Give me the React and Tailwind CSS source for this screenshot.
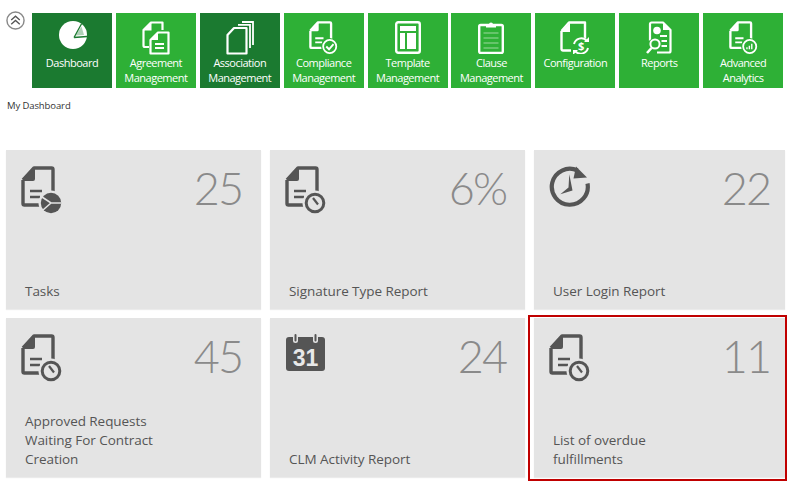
import React from 'react';

const GREEN = '#2eb036';
const DARK_GREEN = '#1b7a30';
const GREY = '#555555';
const CARD = '#e4e4e4';

// document outline with the folded corner, shared by most of the icons
const DocShape = ({color}) => (
  <>
    <path d="M2 14 L13 2 H30.5 A1.5 1.5 0 0 1 32 3.5 V30 M22 39 H3.5 A1.5 1.5 0 0 1 2 37.5 V14" fill="none" stroke={color} strokeWidth="3.4" strokeLinejoin="round"/>
    <path d="M2 15 L14 2 V13 A2 2 0 0 1 12 15 Z" fill={color}/>
    <path d="M9 25 H21 M9 31 H19" stroke={color} strokeWidth="2.6" fill="none"/>
  </>
);

const ClockBadge = ({color, bg}) => (
  <>
    <circle cx="30" cy="37" r="12.5" fill={bg}/>
    <circle cx="30" cy="37" r="8.8" fill="none" stroke={color} strokeWidth="3"/>
    <path d="M28 32 L33 38.5" stroke={color} strokeWidth="2.2" fill="none"/>
  </>
);

const PieBadge = ({color, bg}) => (
  <>
    <circle cx="30" cy="37" r="12.5" fill={bg}/>
    <circle cx="30" cy="37" r="10.2" fill={color}/>
    <path d="M21 31 L30 37 L40 37 M30 37 L22 44" stroke={bg} strokeWidth="1.6" fill="none"/>
  </>
);

const CheckBadge = ({color, bg}) => (
  <>
    <circle cx="30" cy="37" r="12.5" fill={bg}/>
    <circle cx="30" cy="37" r="9.5" fill="none" stroke={color} strokeWidth="2.6"/>
    <path d="M25 37 L29 41 L35.5 33.5" stroke={color} strokeWidth="2.8" fill="none"/>
  </>
);

const ChartBadge = ({color, bg}) => (
  <>
    <circle cx="30" cy="37" r="12.5" fill={bg}/>
    <circle cx="30" cy="37" r="9.5" fill="none" stroke={color} strokeWidth="2.6"/>
    <path d="M25 41 V38 H27 V41 Z M28.5 41 V36 H30.5 V41 Z M32 41 V33 H34 V41 Z" fill={color}/>
  </>
);

const DocIcon = ({badge: Badge, color = GREY, bg = CARD, className}) => (
  <svg viewBox="0 0 42 50" className={className}>
    <DocShape color={color}/>
    <Badge color={color} bg={bg}/>
  </svg>
);

const DashboardIcon = () => (
  <svg viewBox="0 0 28 28" className="w-[28px] h-[28px] ml-[1px]">
    <circle cx="14" cy="14" r="14" fill="white"/>
    <path d="M15 16.5 L22.7 2.5 M15 16.5 L28 15.5" stroke={DARK_GREEN} strokeWidth="1.3" fill="none"/>
    <path d="M16.5 14.5 L22.5 5.5 L25 14 Z" fill={DARK_GREEN} opacity="0.35"/>
  </svg>
);

const AgreementIcon = ({bg}) => (
  <svg viewBox="0 0 28 34" className="w-[28px] h-[34px]">
    <path d="M7 26 H3 A1.5 1.5 0 0 1 1.5 24.5 V9 L9 1.5 H20.5 V9" fill="none" stroke="white" strokeWidth="2.2" strokeLinejoin="round"/>
    <path d="M1.5 9.5 L9.5 1.5 V9.5 Z" fill="white"/>
    <path d="M8.5 19 L16 11.5 H26.5 V32.5 H8.5 Z" fill={bg} stroke="white" strokeWidth="2.2" strokeLinejoin="round"/>
    <path d="M8.5 19 L16 11.5 V19 Z" fill="white"/>
    <path d="M13 23 H22 M13 27 H22" stroke="white" strokeWidth="1.8"/>
  </svg>
);

const AssociationIcon = () => (
  <svg viewBox="0 0 28 34" className="w-[28px] h-[34px]">
    <path d="M1.5 14 L8 7 H20.5 V32.5 H1.5 Z" fill="none" stroke="white" strokeWidth="2.2" strokeLinejoin="round"/>
    <path d="M12 3.8 H24 V27" fill="none" stroke="white" strokeWidth="1.8"/>
    <path d="M16 1 H27 V24" fill="none" stroke="white" strokeWidth="1.8"/>
  </svg>
);

const TemplateIcon = () => (
  <svg viewBox="0 0 26 33" className="w-[26px] h-[33px]">
    <rect x="1.2" y="1.2" width="23.6" height="30.6" rx="2" fill="none" stroke="white" strokeWidth="2.4"/>
    <rect x="5" y="5" width="16" height="5" fill="white"/>
    <rect x="5" y="12" width="5" height="16" fill="white"/>
    <rect x="12" y="12" width="9" height="16" fill="white"/>
  </svg>
);

const ClauseIcon = () => (
  <svg viewBox="0 0 26 33" className="w-[26px] h-[33px]">
    <rect x="1.2" y="4" width="23.6" height="28" rx="1.5" fill="none" stroke="white" strokeWidth="2.4"/>
    <path d="M8 6.5 V3.5 H11 A2 2 0 0 1 15 3.5 H18 V6.5 Z" fill="white"/>
    <path d="M5.5 12 H20.5 M5.5 17 H20.5 M5.5 22 H20.5 M5.5 27 H20.5" stroke="#9bd89e" strokeWidth="1.2"/>
  </svg>
);

const ConfigIcon = ({bg}) => (
  <svg viewBox="0 0 30 33" className="w-[30px] h-[33px]">
    <path d="M1.5 10 L9 1.5 H25 V20 M11 29.5 H3 A1.5 1.5 0 0 1 1.5 28 V10" fill="none" stroke="white" strokeWidth="2.4" strokeLinejoin="round"/>
    <path d="M1.5 11 L10 1.5 V11 Z" fill="white"/>
    <circle cx="21" cy="25" r="9" fill={bg}/>
    <path d="M14 23 A7.5 7.5 0 0 1 26.5 19.5 M28 27 A7.5 7.5 0 0 1 15.5 30.5" fill="none" stroke="white" strokeWidth="2"/>
    <path d="M24 21 H29 V16 Z M18 29 H13 V34 Z" fill="white"/>
    <text x="21" y="29" textAnchor="middle" fontSize="11" fontWeight="700" fontFamily="'Open Sans', sans-serif" fill="white">$</text>
  </svg>
);

const ReportsIcon = ({bg}) => (
  <svg viewBox="0 0 26 34" className="w-[26px] h-[34px]">
    <path d="M4 20 V3 A1.5 1.5 0 0 1 5.5 1.5 H17 L24.5 9 V30 A1.5 1.5 0 0 1 23 31.5 H11" fill="none" stroke="white" strokeWidth="2.2" strokeLinejoin="round"/>
    <path d="M17 1.5 L24.5 9 H17 Z" fill="white"/>
    <circle cx="11" cy="9.5" r="3.8" fill="white"/>
    <path d="M14 15 H21 M15.5 20 H21 M15.5 25 H21" stroke="white" strokeWidth="1.8"/>
    <circle cx="8" cy="24" r="6.5" fill={bg}/>
    <circle cx="9" cy="23" r="4.6" fill="none" stroke="white" strokeWidth="2"/>
    <path d="M5.5 27 L1 32" stroke="white" strokeWidth="2.6"/>
  </svg>
);

const ReloadClockIcon = () => (
  <svg viewBox="0 0 41 41" className="w-[41px] h-[41px]">
    <path d="M38.5 17.5 A18 18 0 1 1 28.5 4.5" fill="none" stroke={GREY} strokeWidth="4.2"/>
    <path d="M27 0.5 L38 11.5 L24.5 12.5 Z" fill={GREY}/>
    <path d="M20.3 8.3 L23.5 24.5 L11.3 28.3 L19.5 21.5 Z" fill={GREY}/>
  </svg>
);

const CalendarIcon = () => (
  <svg viewBox="0 0 41 38" className="w-[41px] h-[38px]">
    <rect x="1" y="3" width="39" height="34" rx="3" fill={GREY}/>
    <rect x="8" y="0" width="5" height="9" rx="2.5" fill={CARD}/>
    <rect x="28" y="0" width="5" height="9" rx="2.5" fill={CARD}/>
    <rect x="9.5" y="0" width="2" height="7.5" rx="1" fill={GREY}/>
    <rect x="29.5" y="0" width="2" height="7.5" rx="1" fill={GREY}/>
    <text x="20.5" y="32" textAnchor="middle" fontSize="23" fontWeight="700" fontFamily="'Liberation Sans', sans-serif" fill="#e8e8e8">31</text>
  </svg>
);

const navDocClass = 'w-[29px] h-[34.5px]';

const navItems = [
  {lines: ['Dashboard'], dark: true, icon: () => <DashboardIcon/>},
  {lines: ['Agreement', 'Management'], icon: (bg) => <AgreementIcon bg={bg}/>},
  {lines: ['Association', 'Management'], dark: true, icon: () => <AssociationIcon/>},
  {lines: ['Compliance', 'Management'], icon: (bg) => <DocIcon badge={CheckBadge} color="white" bg={bg} className={navDocClass}/>},
  {lines: ['Template', 'Management'], icon: () => <TemplateIcon/>},
  {lines: ['Clause', 'Management'], icon: () => <ClauseIcon/>},
  {lines: ['Configuration'], icon: (bg) => <ConfigIcon bg={bg}/>},
  {lines: ['Reports'], icon: (bg) => <ReportsIcon bg={bg}/>},
  {lines: ['Advanced', 'Analytics'], icon: (bg) => <DocIcon badge={ChartBadge} color="white" bg={bg} className={navDocClass}/>},
];

const docCardIcon = (badge) => <DocIcon badge={badge} className="w-[42px] h-[50px]"/>;

const cards = [
  {title: ['Tasks'], value: '25', icon: docCardIcon(PieBadge)},
  {title: ['Signature Type Report'], value: '6%', icon: docCardIcon(ClockBadge)},
  {title: ['User Login Report'], value: '22', icon: <ReloadClockIcon/>, narrow: true},
  {title: ['Approved Requests', 'Waiting For Contract', 'Creation'], value: '45', icon: docCardIcon(ClockBadge)},
  {title: ['CLM Activity Report'], value: '24', icon: <CalendarIcon/>},
  {title: ['List of overdue', 'fulfillments'], value: '11', icon: docCardIcon(ClockBadge), narrow: true, highlighted: true},
];

const NavTile = ({item}) => {
  const bg = item.dark ? DARK_GREEN : GREEN;
  return (
    <div className={`w-[80px] h-[75px] flex flex-col items-center text-white text-[11px] leading-[15px] tracking-[-0.5px] ${item.dark ? 'bg-[#1b7a30]' : 'bg-[#2eb036]'}`}>
      <div className="h-[42px] pt-[8px] flex items-start justify-center">{item.icon(bg)}</div>
      {item.lines.map(line => <span key={line} className="whitespace-nowrap">{line}</span>)}
    </div>
  );
};

const StatCard = ({card}) => (
  <div className={`relative h-[159px] bg-[#e4e4e4] shadow-[0_1px_1px_rgba(0,0,0,0.08)] flex flex-col justify-between pl-[15px] pt-[16px] pb-[8px] ${card.narrow ? 'pr-[15px]' : 'pr-[19px]'}`}>
    <div className="flex justify-between items-start">
      {card.icon}
      <span className="font-['Lato',sans-serif] text-[45px] leading-[44px] font-light text-[#8a8a8a] tracking-[-2px]">{card.value}</span>
    </div>
    <div className="pl-[4px] text-[13.5px] leading-[19px] text-[#555555] tracking-[-0.05px]">
      {card.title.map(line => <div key={line}>{line}</div>)}
    </div>
    {card.highlighted && <div className="absolute -top-[3px] -left-[6px] -right-[2px] -bottom-[4px] border-[2.5px] border-[#c00000]"/>}
  </div>
);

export default function App() {
  return (
    <div className="w-[800px] h-[490px] bg-white overflow-hidden font-['Open_Sans',sans-serif]">
      <div className="flex pt-[13px] pl-[6px]">
        <svg viewBox="0 0 20 20" className="w-[19px] h-[19px] mr-[7px] -mt-[2px]">
          <circle cx="10" cy="10" r="9" fill="none" stroke="#888888" strokeWidth="1.5"/>
          <path d="M5.5 9.5 L10 5.5 L14.5 9.5 M5.5 14 L10 10 L14.5 14" fill="none" stroke="#555555" strokeWidth="1.4"/>
        </svg>
        <div className="flex gap-[3.9px]">
          {navItems.map(item => <NavTile key={item.lines[0]} item={item}/>)}
        </div>
      </div>
      <p className="pl-[7px] mt-[10px] h-[52px] text-[9.5px] leading-[15px] text-[#333333] tracking-[-0.1px]">My Dashboard</p>
      <div className="grid grid-cols-[255px_255px_251px] gap-[9px] pl-[6px]">
        {cards.map(card => <StatCard key={card.value} card={card}/>)}
      </div>
    </div>
  );
}
